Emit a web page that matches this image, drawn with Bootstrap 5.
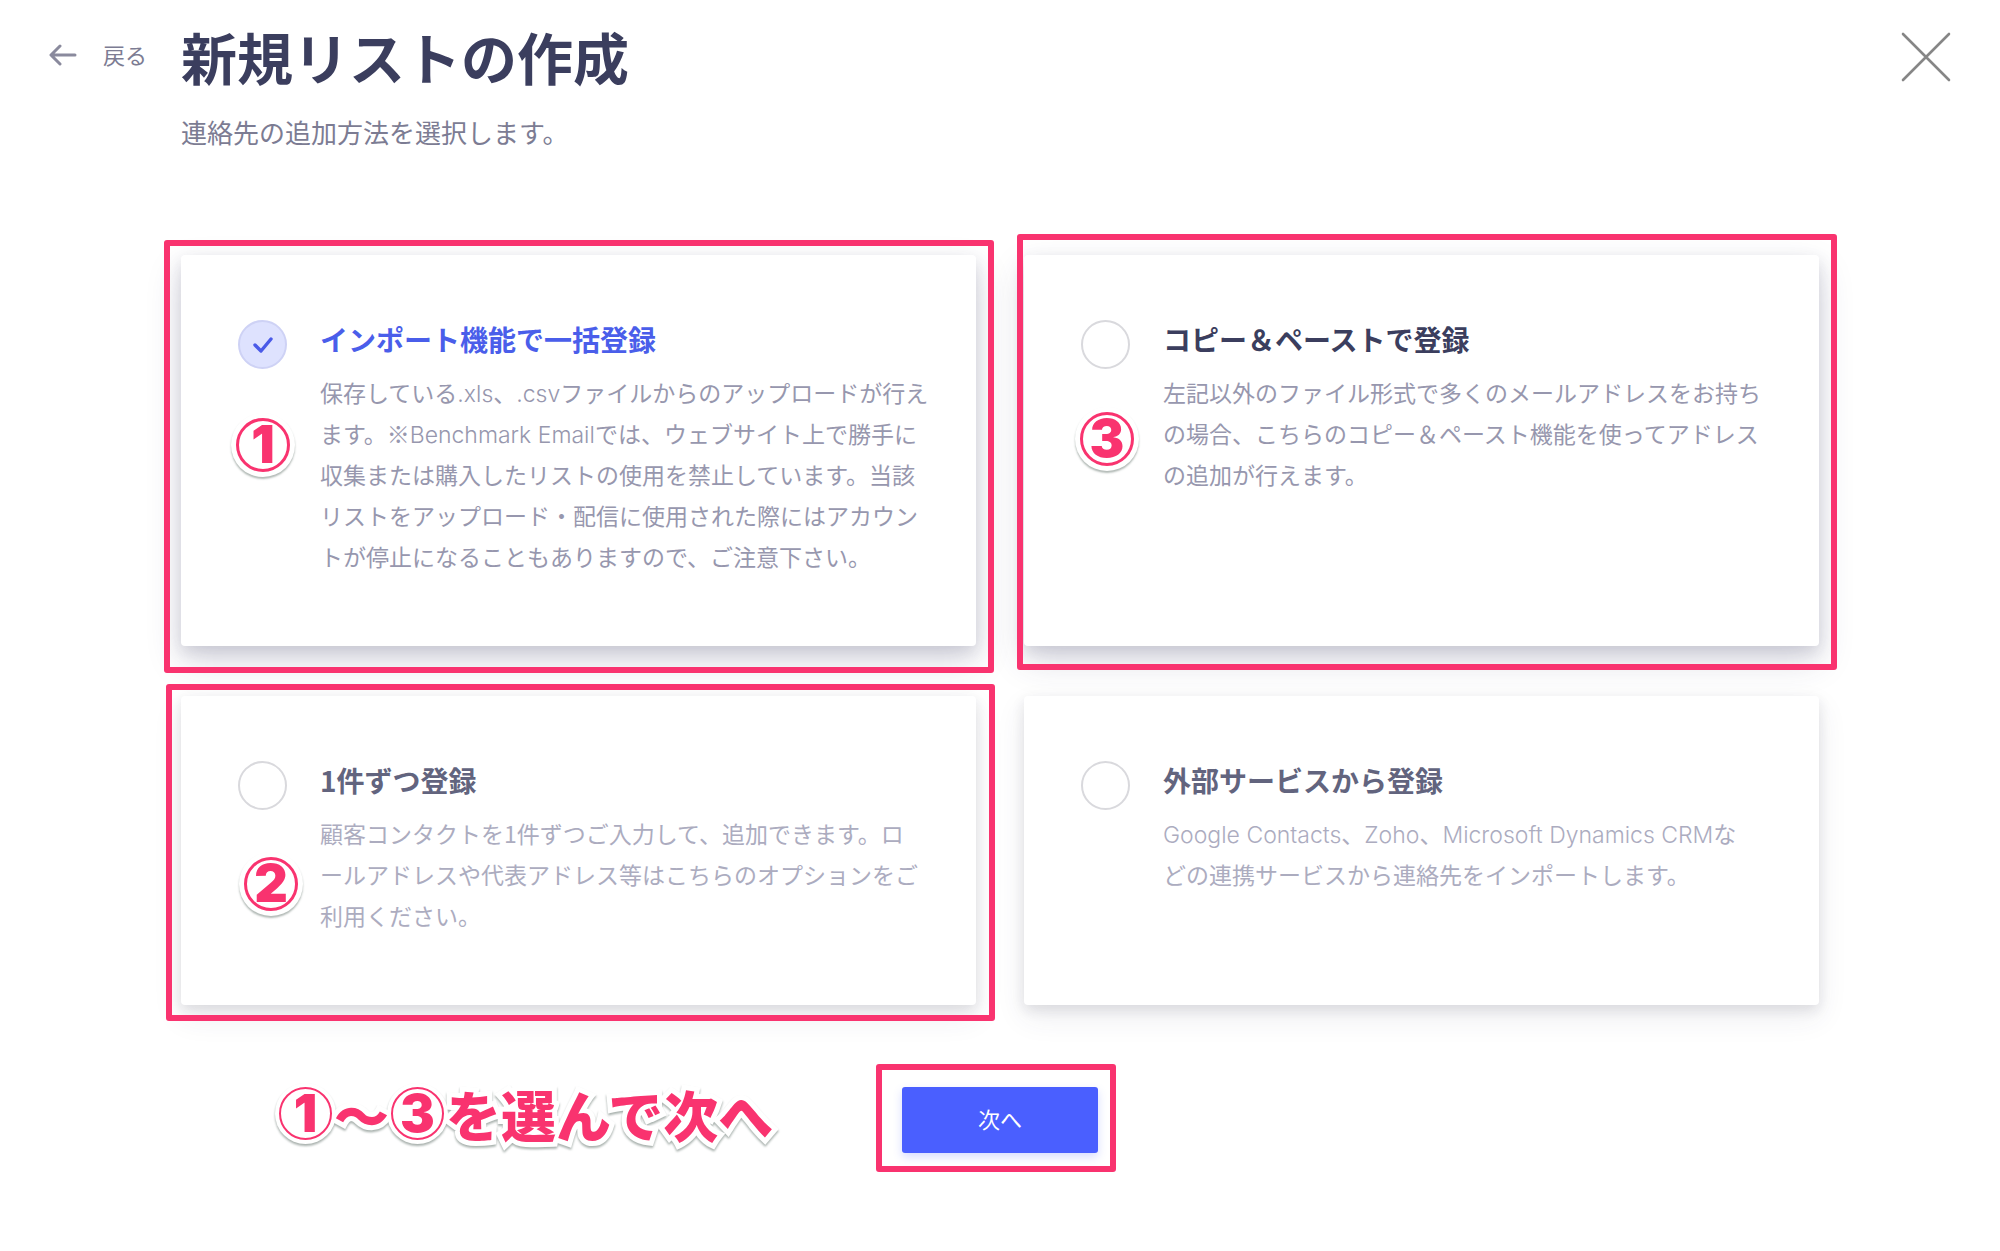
<!DOCTYPE html>
<html lang="ja">
<head>
<meta charset="utf-8">
<meta name="viewport" content="width=device-width, initial-scale=1">
<title>新規リストの作成</title>
<link href="https://cdn.jsdelivr.net/npm/bootstrap@5.3.0/dist/css/bootstrap.min.css" rel="stylesheet">
<style>
  :root { --pink: #f9336f; --ink: #3b3e5e; --soft: #7c7c93; --gutter: 181px; }
  body { font-family: "Noto Sans CJK JP", sans-serif; color: var(--ink); background: #fff; }
  .latin { font-family: Inter, "Noto Sans CJK JP", sans-serif; font-weight: 300; line-height: 1; }

  .page-head { padding-top: 24px; }
  .side-col { width: var(--gutter); flex: none; }
  .back-link { font-size: 22px; line-height: 32px; color: var(--soft); padding: 14px 0 0 49px; gap: 26px; }
  .close-btn { margin: 6px 47px 0 auto; width: 54px; height: 54px; }
  .page-title { font-size: 56px; line-height: 64px; font-weight: 700; }
  .page-sub { font-size: 26px; line-height: 40px; color: var(--soft); margin-top: 24px; }

  .page-main { padding: 103px var(--gutter) 98px; }
  .option-grid { display: grid; grid-template-columns: 1fr 1fr; gap: 50px 48px; }
  .option { cursor: pointer; border-radius: 4px; background: #fff; padding: 65px 46px 69px 57px; gap: 33px; height: 100%;
    box-shadow: 0 15px 35px rgba(50,50,93,.18), 0 6px 15px rgba(30,30,70,.13); }
  .option-quiet { box-shadow: 0 12px 30px rgba(50,50,93,.09), 0 5px 13px rgba(30,30,50,.11); }
  .pick.form-check-input { width: 49px; height: 49px; flex: none; margin: 0; border: 2px solid #d9d9dd; background-size: 49px 49px; background-position: center; }
  .pick.form-check-input:checked { background-color: #dee2fe; border-color: #ced2f5;
    background-image: url("data:image/svg+xml,%3Csvg xmlns='http://www.w3.org/2000/svg' viewBox='0 0 49 49'%3E%3Cpath d='M17 25l6 6 10-12' fill='none' stroke='%234a5ae8' stroke-width='3.4' stroke-linecap='round' stroke-linejoin='round'/%3E%3C/svg%3E"); }
  .option-title { font-size: 28px; line-height: 38px; font-weight: 700; margin-bottom: 14px; }
  .option-text { font-size: 23px; line-height: 41px; color: #9797ae; }
  .option-quiet .option-title { color: #62647e; }
  .option-quiet .option-text { color: #acacbf; }
  .pick:checked ~ div .option-title { color: #4a5eea; }

  .mark-frame { position: absolute; z-index: 2; border: 6px solid var(--pink); border-radius: 3px; pointer-events: none; }
  .frame-a { inset: -15px -18px -27px -17px; }
  .frame-b { inset: -21px -18px -24px -7px; }
  .frame-c { inset: -12px -19px -16px -15px; }
  .frame-d { inset: -23px -18px -19px -26px; }
  .mark-num { position: absolute; z-index: 3; width: 54px; height: 54px; border: 3px solid var(--pink); border-radius: 50%; background: #fff;
    color: var(--pink); font: 900 52px/48px Inter, sans-serif; text-align: center;
    box-shadow: 0 0 0 5px #fff, 0 2px 2px 5px rgba(60,80,70,.4); }
  .num-a { left: 55px; top: 163px; }
  .num-b { left: 56px; top: 157px; }
  .num-c { left: 63px; top: 161px; }

  .action-row { display: grid; grid-template-columns: 1fr auto 1fr; margin-top: 82px; }
  .mark-note { font-size: 55px; line-height: 52px; font-weight: 900; color: var(--pink); padding-left: 96px; white-space: nowrap;
    filter: drop-shadow(0 2px 1px rgba(60,80,70,.45)); }
  .note-text { -webkit-text-stroke: 10px #fff; paint-order: stroke fill; }
  .note-ring { position: relative; z-index: 1; width: 53px; height: 53px; margin: 0 2px; border: 2px solid var(--pink); border-radius: 50%; background: #fff;
    font: 900 52px/49px Inter, sans-serif; text-align: center; box-shadow: 0 0 0 4px #fff; }
  .next-btn { width: 196px; height: 66px; padding: 0 0 4px; font-size: 22px; color: #fff; background: #4a5fff; border: 0; border-radius: 3px; box-shadow: 0 4px 10px rgba(74,95,255,.22); }
  .next-btn:hover { color: #fff; background: #3d51ec; }
</style>
</head>
<body>
<header class="page-head d-flex align-items-start">
  <div class="side-col">
    <a href="#" class="back-link d-flex align-items-center text-decoration-none">
      <svg width="28" height="24" viewBox="0 0 28 24" fill="none" stroke="#8a8a9d" stroke-width="3" stroke-linecap="round" stroke-linejoin="round" aria-hidden="true"><path d="M26 13H3M11 4L2 13l9 9"/></svg>
      <span>戻る</span>
    </a>
  </div>
  <div class="flex-grow-1">
    <h1 class="page-title mb-0">新規リストの作成</h1>
    <p class="page-sub mb-0">連絡先の追加方法を選択します。</p>
  </div>
  <button type="button" class="close-btn btn p-0 border-0" aria-label="閉じる">
    <svg class="d-block" width="54" height="54" viewBox="0 0 54 54" fill="none" stroke="#868686" stroke-width="2.6" stroke-linecap="round" aria-hidden="true"><path d="M4 4l46 46M50 4L4 50"/></svg>
  </button>
</header>

<main class="page-main">
  <form>
    <div class="option-grid">
      <div class="position-relative">
        <label class="option d-flex align-items-start" for="opt-import">
          <input class="form-check-input pick" type="radio" name="method" id="opt-import" checked>
          <div>
            <div class="option-title">インポート機能で一括登録</div>
            <div class="option-text">保存している<span class="latin">.xls</span>、<span class="latin">.csv</span>ファイルからのアップロードが行えます。※<span class="latin">Benchmark Email</span>では、ウェブサイト上で勝手に収集または購入したリストの使用を禁止しています。当該リストをアップロード・配信に使用された際にはアカウントが停止になることもありますので、ご注意下さい。</div>
          </div>
        </label>
        <div class="mark-frame frame-a"></div>
        <div class="mark-num num-a">1</div>
      </div>
      <div class="position-relative">
        <label class="option d-flex align-items-start" for="opt-paste">
          <input class="form-check-input pick" type="radio" name="method" id="opt-paste">
          <div>
            <div class="option-title">コピー＆ペーストで登録</div>
            <div class="option-text">左記以外のファイル形式で多くのメールアドレスをお持ちの場合、こちらのコピー＆ペースト機能を使ってアドレスの追加が行えます。</div>
          </div>
        </label>
        <div class="mark-frame frame-b"></div>
        <div class="mark-num num-b">3</div>
      </div>
      <div class="position-relative">
        <label class="option option-quiet d-flex align-items-start" for="opt-single">
          <input class="form-check-input pick" type="radio" name="method" id="opt-single">
          <div>
            <div class="option-title">1件ずつ登録</div>
            <div class="option-text">顧客コンタクトを1件ずつご入力して、追加できます。ロ<br>ールアドレスや代表アドレス等はこちらのオプションをご利用ください。</div>
          </div>
        </label>
        <div class="mark-frame frame-c"></div>
        <div class="mark-num num-c">2</div>
      </div>
      <div class="position-relative">
        <label class="option option-quiet d-flex align-items-start" for="opt-service">
          <input class="form-check-input pick" type="radio" name="method" id="opt-service">
          <div>
            <div class="option-title">外部サービスから登録</div>
            <div class="option-text"><span class="latin">Google Contacts</span>、<span class="latin">Zoho</span>、<span class="latin">Microsoft Dynamics CRM</span>な<br>どの連携サービスから連絡先をインポートします。</div>
          </div>
        </label>
      </div>
    </div>

    <div class="action-row">
      <div class="mark-note d-flex align-items-start"><span class="note-ring">1</span><span class="note-text">〜</span><span class="note-ring">3</span><span class="note-text">を選んで次へ</span></div>
      <div class="position-relative">
        <button type="submit" class="btn next-btn">次へ</button>
        <div class="mark-frame frame-d"></div>
      </div>
      <div></div>
    </div>
  </form>
</main>
<script src="https://cdn.jsdelivr.net/npm/bootstrap@5.3.0/dist/js/bootstrap.bundle.min.js"></script>
</body>
</html>
